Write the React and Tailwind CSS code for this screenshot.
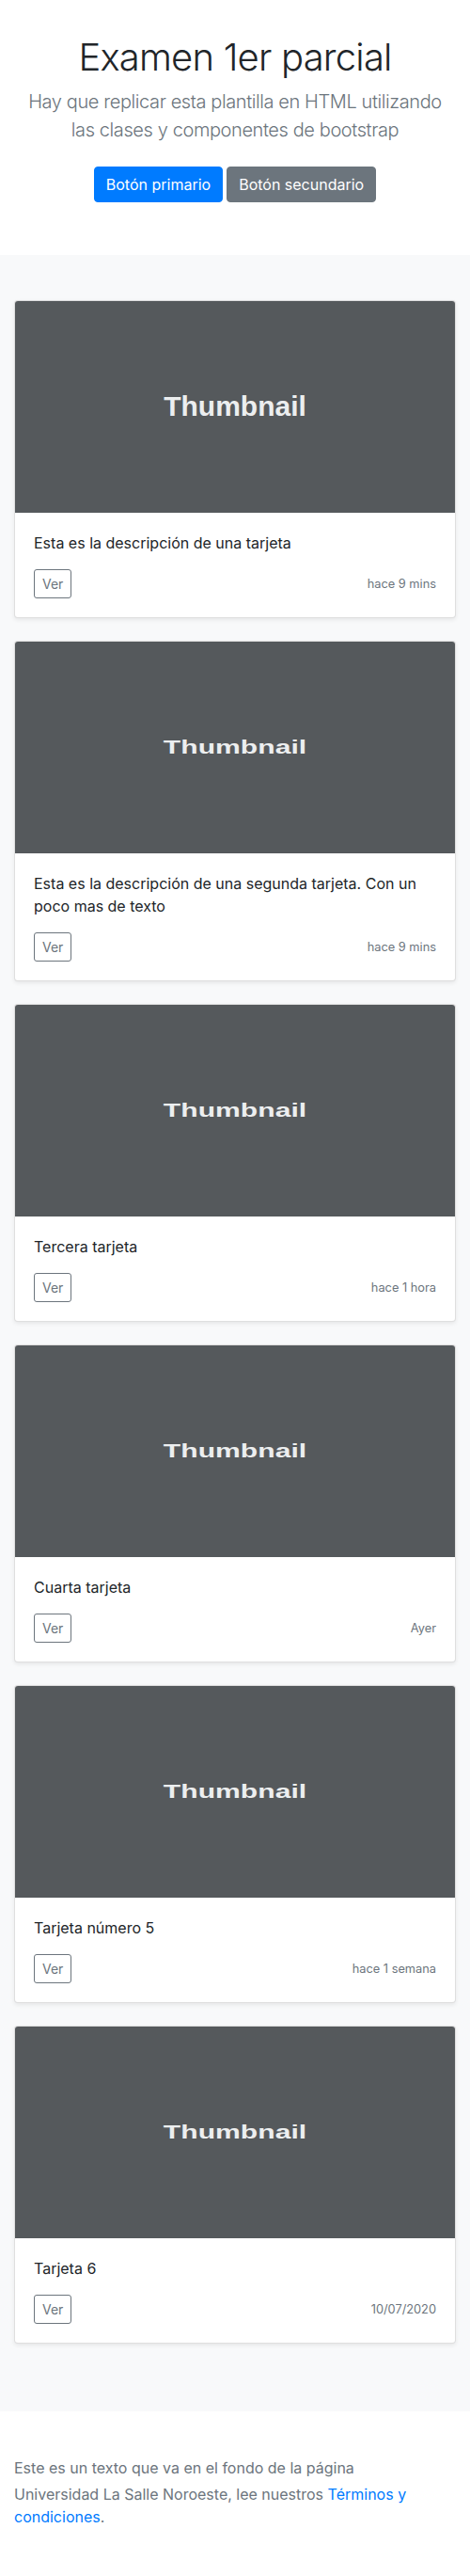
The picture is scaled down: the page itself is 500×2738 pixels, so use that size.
import React from "react";

const cards = [
  { text: "Esta es la descripción de una tarjeta", time: "hace 9 mins", wide: false },
  {
    text: "Esta es la descripción de una segunda tarjeta. Con un poco mas de texto",
    time: "hace 9 mins",
    wide: true,
  },
  { text: "Tercera tarjeta", time: "hace 1 hora", wide: true },
  { text: "Cuarta tarjeta", time: "Ayer", wide: true },
  { text: "Tarjeta número 5", time: "hace 1 semana", wide: true },
  { text: "Tarjeta 6", time: "10/07/2020", wide: true },
];

// Placeholder image; the later ones are stretched horizontally like in the original
function Thumbnail({ wide }) {
  if (!wide) {
    return (
      <svg className="block w-full h-[225px]" xmlns="http://www.w3.org/2000/svg">
        <rect width="100%" height="100%" fill="#55595c" />
        <text
          x="50%"
          y="50%"
          dy=".33em"
          textAnchor="middle"
          fill="#eceeef"
          fontSize="30"
          fontWeight="700"
          fontFamily="'Liberation Sans', Arial, sans-serif"
        >
          Thumbnail
        </text>
      </svg>
    );
  }
  return (
    <svg
      className="block w-full h-[225px]"
      viewBox="0 0 326 225"
      preserveAspectRatio="none"
      xmlns="http://www.w3.org/2000/svg"
    >
      <rect width="326" height="225" fill="#55595c" />
      <text
        x="163"
        y="112.5"
        dy=".33em"
        textAnchor="middle"
        fill="#eceeef"
        fontSize="21"
        fontWeight="700"
        fontFamily="'Liberation Sans', Arial, sans-serif"
      >
        Thumbnail
      </text>
    </svg>
  );
}

function Card({ text, time, wide }) {
  return (
    <div className="bg-white border border-black/[.125] rounded-[4px] overflow-hidden shadow-[0_2px_4px_rgba(0,0,0,0.075)]">
      <Thumbnail wide={wide} />
      <div className="p-5">
        <p className="text-base leading-6 mb-4">{text}</p>
        <div className="flex items-center justify-between">
          <button className="border border-[#6c757d] text-[#6c757d] text-[14px] leading-[21px] px-2 py-1 rounded-[3px] bg-transparent">
            Ver
          </button>
          <small className="text-[12.8px] text-[#6c757d]">{time}</small>
        </div>
      </div>
    </div>
  );
}

export default function App() {
  return (
    <div className="font-['Inter','Liberation_Sans',sans-serif] text-[#212529] bg-white">
      {/* Jumbotron */}
      <section className="bg-white text-center pt-[37px] pb-12 px-4">
        <div className="px-[15px]">
          <h1 className="text-[40px] leading-[1.2] font-light tracking-[-0.02em] mb-2">
            Examen 1er parcial
          </h1>
          <p className="text-[20px] leading-[1.5] font-light tracking-[-0.02em] text-[#6c757d] mb-4 -mx-4">
            <span className="whitespace-nowrap">Hay que replicar esta plantilla en HTML utilizando</span>
            <br />
            las clases y componentes de bootstrap
          </p>
          <div className="flex justify-center gap-1 py-2">
            <a className="inline-block bg-[#007bff] border border-[#007bff] text-white text-base leading-6 px-3 py-1.5 rounded-[4px]">
              Botón primario
            </a>
            <a className="inline-block bg-[#6c757d] border border-[#6c757d] text-white text-base leading-6 px-3 py-1.5 rounded-[4px]">
              Botón secundario
            </a>
          </div>
        </div>
      </section>

      {/* Album */}
      <div className="bg-[#f8f9fa] py-12">
        <div className="px-[15px] flex flex-col gap-6 mb-6">
          {cards.map((c, i) => (
            <Card key={i} {...c} />
          ))}
        </div>
      </div>

      {/* Footer */}
      <footer className="text-[#6c757d] pt-12 pb-[52px] px-[15px] text-base leading-6">
        <p className="mb-1">Este es un texto que va en el fondo de la página</p>
        <p>
          Universidad La Salle Noroeste, lee nuestros{" "}
          <a className="text-[#007bff]">Términos y condiciones</a>.
        </p>
      </footer>
    </div>
  );
}
